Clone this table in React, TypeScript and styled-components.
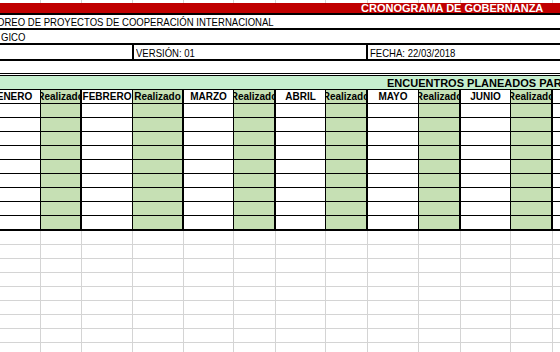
import React from "react";
import styled, { createGlobalStyle } from "styled-components";

const GlobalStyle = createGlobalStyle`
  html, body { margin: 0; padding: 0; background: #ffffff; overflow: hidden; }
  body { width: 560px; height: 352px; font-family: "Liberation Sans", Arial, sans-serif; color: #000; }
  * { box-sizing: border-box; }
`;

const COLS = "52px 41px 51px 51px 50px 42px 50px 42px 51px 42px 50px 42px 60px";
const GRID_GRAY = "#d4d4d4";
const DONE_GREEN = "#c6e0b4";
const BAND_GREEN = "#c6efce";
const TITLE_RED = "#c00000";

const Sheet = styled.div`
  margin-left: -11px;
  width: 584px;
  display: flex;
  flex-direction: column;
`;

const PlainRow = styled.div<{ $h: number; $gray?: boolean }>`
  display: grid;
  grid-template-columns: ${COLS};
  height: ${(p) => p.$h}px;
  border-bottom: ${(p) => (p.$gray ? `1px solid ${GRID_GRAY}` : "none")};
  box-sizing: content-box;
`;

const PlainCell = styled.div`
  border-right: 1px solid ${GRID_GRAY};
`;

const TitleBar = styled.div`
  height: 10px;
  box-sizing: content-box;
  background: ${TITLE_RED};
  border-bottom: 2px solid #000;
  padding-left: 372px;
  color: #ffffff;
  font-weight: bold;
  font-size: 11px;
  line-height: 10px;
  white-space: nowrap;
  overflow: hidden;
`;

const InfoRow = styled.div<{ $h: number; $indent: number }>`
  height: ${(p) => p.$h}px;
  box-sizing: content-box;
  border-bottom: 2px solid #000;
  display: flex;
  align-items: flex-end;
  padding-left: ${(p) => p.$indent}px;
  white-space: nowrap;
  overflow: hidden;
`;

const InfoText = styled.span`
  display: inline-block;
  font-family: "Liberation Sans", Arial, sans-serif;
  font-size: 11.5px;
  line-height: 12px;
  transform: scaleX(0.83);
  transform-origin: left bottom;
`;

const MetaRow = styled.div`
  display: grid;
  grid-template-columns: 145px 234px 1fr;
  height: 14px;
  box-sizing: content-box;
  border-bottom: 2px solid #000;
`;

const MetaCell = styled.div<{ $divider?: boolean }>`
  display: flex;
  align-items: flex-end;
  padding-left: 2px;
  border-right: ${(p) => (p.$divider ? "2px solid #000" : "none")};
  white-space: nowrap;
  overflow: hidden;
`;

const BlankRow = styled.div`
  height: 12px;
  box-sizing: content-box;
  border-bottom: 3px double #000;
`;

const Band = styled.div`
  height: 13px;
  box-sizing: content-box;
  background: ${BAND_GREEN};
  border-bottom: 1px solid #000;
  display: flex;
  align-items: flex-end;
  padding-left: 398px;
  font-weight: bold;
  font-size: 11px;
  line-height: 12px;
  white-space: nowrap;
  overflow: hidden;
`;

const TableRow = styled.div<{ $thick?: boolean }>`
  display: grid;
  grid-template-columns: ${COLS};
  height: 13px;
  box-sizing: content-box;
  border-bottom: ${(p) => (p.$thick ? "2px" : "1px")} solid #000;
`;

type Kind = "month" | "done" | "rest";

const Cell = styled.div<{ $kind: Kind; $tint?: boolean }>`
  display: flex;
  justify-content: center;
  align-items: center;
  overflow: hidden;
  white-space: nowrap;
  font-weight: bold;
  font-size: 10px;
  line-height: 12px;
  background: ${(p) => (p.$kind === "done" && p.$tint ? DONE_GREEN : "#ffffff")};
  border-right: ${(p) =>
    p.$kind === "month" ? "1px solid #000" : p.$kind === "done" ? "2px solid #000" : "none"};
`;

const MONTHS = ["ENERO", "FEBRERO", "MARZO", "ABRIL", "MAYO", "JUNIO"];

const columns: { kind: Kind; label: string }[] = [
  ...MONTHS.flatMap((m) => [
    { kind: "month" as Kind, label: m },
    { kind: "done" as Kind, label: "Realizado" },
  ]),
  { kind: "rest", label: "" },
];

const DATA_ROWS = 9;
const GRAY_ROWS = 9;

export default function App() {
  return (
    <>
      <GlobalStyle />
      <Sheet>
        <PlainRow $h={3}>
          {columns.map((c, i) => (
            <PlainCell key={i} />
          ))}
        </PlainRow>
        <TitleBar>CRONOGRAMA DE GOBERNANZA</TitleBar>
        <InfoRow $h={13} $indent={8}>
          <InfoText>OREO DE PROYECTOS DE COOPERACIÓN INTERNACIONAL</InfoText>
        </InfoRow>
        <InfoRow $h={13} $indent={12}>
          <InfoText>GICO</InfoText>
        </InfoRow>
        <MetaRow>
          <MetaCell $divider />
          <MetaCell $divider>
            <InfoText>VERSIÓN: 01</InfoText>
          </MetaCell>
          <MetaCell>
            <InfoText>FECHA: 22/03/2018</InfoText>
          </MetaCell>
        </MetaRow>
        <BlankRow />
        <Band>ENCUENTROS PLANEADOS PARA</Band>
        <TableRow>
          {columns.map((c, i) => (
            <Cell key={i} $kind={c.kind} $tint>
              {c.label}
            </Cell>
          ))}
        </TableRow>
        {Array.from({ length: DATA_ROWS }).map((_, r) => (
          <TableRow key={r} $thick={r === DATA_ROWS - 1}>
            {columns.map((c, i) => (
              <Cell key={i} $kind={c.kind} $tint />
            ))}
          </TableRow>
        ))}
        {Array.from({ length: GRAY_ROWS }).map((_, r) => (
          <PlainRow key={r} $h={13} $gray>
            {columns.map((c, i) => (
              <PlainCell key={i} />
            ))}
          </PlainRow>
        ))}
      </Sheet>
    </>
  );
}
